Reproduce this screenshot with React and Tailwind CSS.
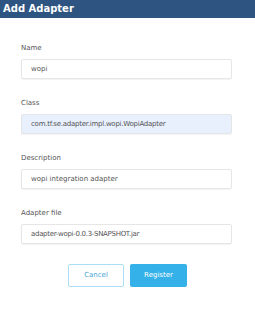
export default function App() {
  const fields = [
    { label: "Name", value: "wopi", bg: "bg-white" },
    { label: "Class", value: "com.tf.se.adapter.impl.wopi.WopiAdapter", bg: "bg-[#e8f0fe]", cls: "tracking-[-0.25px]" },
    { label: "Description", value: "wopi integration adapter", bg: "bg-white" },
    { label: "Adapter file", value: "adapter-wopi-0.0.3-SNAPSHOT.jar", bg: "bg-white", cls: "tracking-[-0.3px]" },
  ];
  return (
    <div className="w-[255px] h-[310px] bg-white font-['DejaVu_Sans',sans-serif] overflow-hidden">
      <div className="h-[18px] bg-[#2e5481] flex items-center px-[3px]">
        <span className="text-white font-bold text-[10px] leading-none">Add Adapter</span>
      </div>
      <div className="pl-[21px] pt-[26px] flex flex-col">
        {fields.map((f, i) => (
          <div key={i} className="flex flex-col h-[55px]">
            <div className="h-[15px] text-[7px] text-[#555] leading-none pt-[1px]">{f.label}</div>
            <div className={`w-[211px] h-[20px] border border-[#e6e6e6] rounded-[2px] shadow-[0_1px_1px_rgba(0,0,0,0.05)] flex items-center px-[9px] ${f.bg}`}>
              <span className={`text-[7px] text-[#555] leading-none ${f.cls || ""}`}>{f.value}</span>
            </div>
          </div>
        ))}
      </div>
      <div className="flex justify-center gap-[6px]">
        <button className="w-[56px] h-[23px] border border-[#a9def6] rounded-[2px] text-[7px] text-[#4aa6d6] bg-white">Cancel</button>
        <button className="w-[57px] h-[23px] rounded-[2px] text-[7px] text-white bg-[#34b1e8]">Register</button>
      </div>
    </div>
  );
}
